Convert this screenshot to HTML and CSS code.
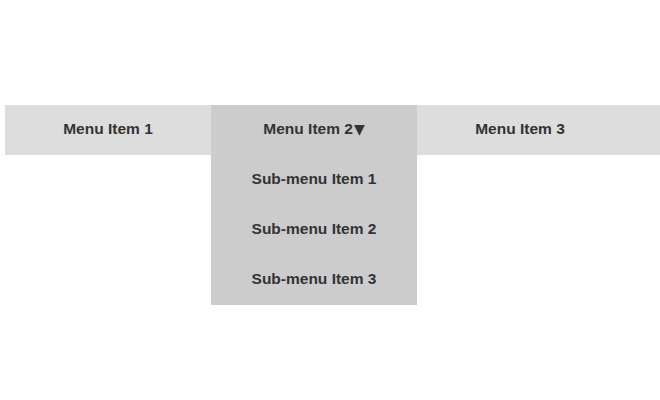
FILE: index.html
```html
<!DOCTYPE html>
<html>
<head>
<meta charset="utf-8">
<link rel="stylesheet" href="styles.css">
</head>
<body>
<nav class="menu">
  <ul class="menu-list">
    <li class="menu-item"><a class="label">Menu Item 1</a></li>
    <li class="menu-item open"><a class="label">Menu Item 2<span class="caret">&#9660;</span></a>
      <ul class="submenu">
        <li class="sub-item"><a class="label">Sub-menu Item 1</a></li>
        <li class="sub-item"><a class="label">Sub-menu Item 2</a></li>
        <li class="sub-item"><a class="label">Sub-menu Item 3</a></li>
      </ul>
    </li>
    <li class="menu-item"><a class="label">Menu Item 3</a></li>
  </ul>
</nav>
</body>
</html>
```
FILE: styles.css
```css
html, body {
  margin: 0;
  padding: 0;
  background: #fff;
}
body {
  padding: 105px 0 0 5px;
  font-family: "Liberation Sans", Arial, sans-serif;
  min-height: 400px;
  box-sizing: border-box;
}
.menu-list {
  list-style: none;
  margin: 0;
  padding: 0;
  display: flex;
  background: #dddddd;
}
.menu-item {
  position: relative;
  width: 206px;
}
.label {
  display: block;
  height: 50px;
  line-height: 48px;
  text-align: center;
  font-weight: bold;
  font-size: 15.5px;
  color: #333;
}
.caret {
  font-family: "DejaVu Sans", sans-serif;
  font-size: 14px;
  margin-left: 1px;
}
.menu-item.open {
  background: #cccccc;
}
.submenu {
  position: absolute;
  z-index: 10;
  top: 50px;
  left: 0;
  width: 206px;
  list-style: none;
  margin: 0;
  padding: 0;
  background: #cccccc;
}
```
